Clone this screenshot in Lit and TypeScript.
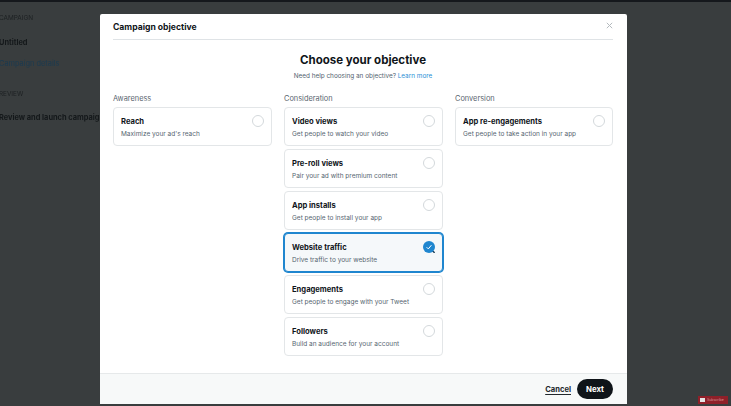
import { LitElement, html, css, svg } from "lit";
import { customElement } from "lit/decorators.js";
import { classMap } from "lit/directives/class-map.js";

type Item = { t: string; d: string; sel?: boolean };
const cols: { h: string; items: Item[] }[] = [
  { h: "Awareness", items: [{ t: "Reach", d: "Maximize your ad's reach" }] },
  {
    h: "Consideration",
    items: [
      { t: "Video views", d: "Get people to watch your video" },
      { t: "Pre-roll views", d: "Pair your ad with premium content" },
      { t: "App installs", d: "Get people to install your app" },
      { t: "Website traffic", d: "Drive traffic to your website", sel: true },
      { t: "Engagements", d: "Get people to engage with your Tweet" },
      { t: "Followers", d: "Build an audience for your account" },
    ],
  },
  { h: "Conversion", items: [{ t: "App re-engagements", d: "Get people to take action in your app" }] },
];

@customElement("app-root")
export class AppRoot extends LitElement {
  static styles = css`
    :host {
      display: block;
      position: relative;
      width: 731px;
      height: 406px;
      overflow: hidden;
      background: #393d3e;
      font-family: Inter, "Liberation Sans", sans-serif;
      color: #0f1419;
    }
    .soft { filter: blur(0.4px); width: 731px; height: 406px; }
    .topbar { height: 2px; background: #15181c; }
    .side {
      width: 100px;
      overflow: hidden;
      white-space: nowrap;
      display: flex;
      flex-direction: column;
      padding-top: 11px;
      color: #14181a;
      box-sizing: border-box;
    }
    .side div { font-size: 7.4px; line-height: 10px; margin-left: -1px; }
    .s1 { color: #1c2022; font-size: 6.4px !important; }
    .s2 { font-weight: 700; margin-top: 15px; }
    .s3 { color: #1a3a50; margin-top: 11px; }
    .s4 { color: #1c2022; font-size: 6.4px !important; margin-top: 20px; }
    .s5 { font-weight: 700; margin-top: 14px; }
    .modal {
      position: absolute;
      left: 100px;
      top: 14px;
      width: 527px;
      height: 390px;
      background: #fff;
      border-radius: 2px;
      display: flex;
      flex-direction: column;
    }
    .body { flex: 1; padding: 0 14px 0 13px; display: flex; flex-direction: column; }
    .head {
      height: 24px;
      border-bottom: 1px solid #dfe3e6;
      display: flex;
      align-items: center;
      justify-content: space-between;
      font-size: 8.6px;
      font-weight: 700;
      padding-top: 1px;
      box-sizing: content-box;
    }
    .close { width: 7px; height: 7px; margin-bottom: 3px; display: block; }
    h1 {
      margin: 12px 0 0;
      font-size: 11.5px;
      line-height: 16px;
      font-weight: 700;
      text-align: center;
    }
    .help {
      margin-top: 3px;
      font-size: 6.4px;
      line-height: 10px;
      text-align: center;
      color: #536471;
    }
    .help span { color: #2a8fd6; }
    .grid {
      margin-top: 13px;
      display: grid;
      grid-template-columns: 159px 159px 158px;
      column-gap: 12px;
    }
    .col-h { font-size: 7.4px; line-height: 10px; color: #5b6670; margin-bottom: 3px; }
    .list { display: flex; flex-direction: column; gap: 3px; }
    .card {
      height: 39px;
      box-sizing: border-box;
      border: 1px solid #e3e6e8;
      border-radius: 4px;
      padding: 8px 7px 0 7px;
      display: flex;
      justify-content: space-between;
      background: #fff;
    }
    .card.sel {
      border-color: #1f86cf;
      box-shadow: 0 0 0 1px #1f86cf;
      background: #f5f8fa;
    }
    .t { font-size: 7.6px; line-height: 11px; font-weight: 700; }
    .d { font-size: 6.5px; line-height: 10px; margin-top: 2px; color: #566570; white-space: nowrap; }
    .radio { width: 12px; height: 12px; display: block; flex: none; margin-top: -1px; }
    .foot {
      height: 31px;
      box-sizing: border-box;
      background: #f7f9f9;
      border-top: 1px solid #e6e9ea;
      display: flex;
      align-items: center;
      justify-content: flex-end;
      gap: 6px;
      padding: 0 14px 0 0;
    }
    .cancel { font-size: 7.6px; font-weight: 700; text-decoration: underline; text-underline-offset: 2px; color: #22282c; }
    .next {
      width: 36px;
      height: 20px;
      border-radius: 10px;
      background: #0f1419;
      color: #fff;
      font-size: 7.8px;
      font-weight: 700;
      display: flex;
      align-items: center;
      justify-content: center;
    }
    .yt {
      position: absolute;
      left: 698px;
      top: 396px;
      width: 30px;
      height: 8px;
      background: #8f2029;
      color: #d89a9a;
      font-size: 3.5px;
      display: flex;
      align-items: center;
      gap: 2px;
      padding-left: 2px;
      box-sizing: border-box;
    }
    .yt i { width: 5px; height: 4px; background: #e4e4e4; display: block; }
  `;

  private radio(sel?: boolean) {
    return sel
      ? svg`<svg class="radio" viewBox="0 0 12 12"><circle cx="6" cy="6" r="6" fill="#1f86cf"/><path d="M3.6 6.2 5.3 7.9 8.4 4.2" fill="none" stroke="#fff" stroke-width="1"/><path d="M10 10.2 11.6 11.8" stroke="#12364f" stroke-width="1.4"/></svg>`
      : svg`<svg class="radio" viewBox="0 0 12 12"><circle cx="6" cy="6" r="5.5" fill="none" stroke="#d3d8db" stroke-width="1"/></svg>`;
  }

  render() {
    return html`
      <div class="soft">
      <div class="topbar"></div>
      <div class="side">
        <div class="s1">CAMPAIGN</div>
        <div class="s2">Untitled</div>
        <div class="s3">Campaign details</div>
        <div class="s4">REVIEW</div>
        <div class="s5">Review and launch campaign</div>
      </div>
      <div class="modal">
        <div class="body">
          <div class="head">
            <span>Campaign objective</span>
            <svg class="close" viewBox="0 0 7 7"><path d="M.8.8 6.2 6.2M6.2.8.8 6.2" stroke="#b4babe" stroke-width="1"/></svg>
          </div>
          <h1>Choose your objective</h1>
          <div class="help">Need help choosing an objective? <span>Learn more</span></div>
          <div class="grid">
            ${cols.map(
              (c) => html`<div>
                <div class="col-h">${c.h}</div>
                <div class="list">
                  ${c.items.map(
                    (i) => html`<div class=${classMap({ card: true, sel: !!i.sel })}>
                      <div><div class="t">${i.t}</div><div class="d">${i.d}</div></div>
                      ${this.radio(i.sel)}
                    </div>`
                  )}
                </div>
              </div>`
            )}
          </div>
        </div>
        <div class="foot">
          <span class="cancel">Cancel</span>
          <span class="next">Next</span>
        </div>
      </div>
      <div class="yt"><i></i>Subscribe</div>
      </div>
    `;
  }
}
